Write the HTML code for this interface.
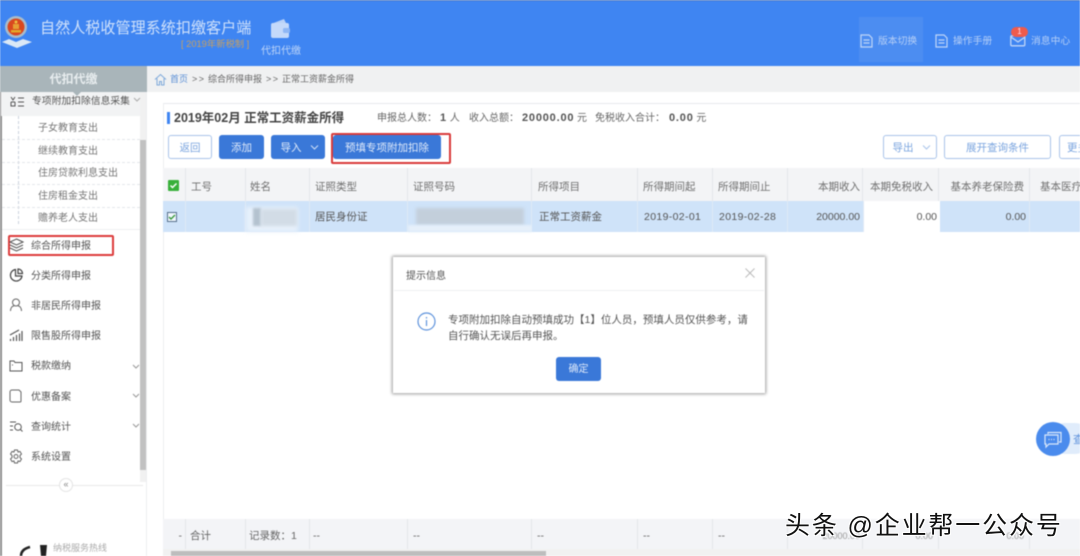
<!DOCTYPE html>
<html lang="zh"><head><meta charset="utf-8">
<style>
*{box-sizing:border-box;margin:0;padding:0}
html,body{width:1080px;height:556px;overflow:hidden;background:#fff}
body{font-family:"Liberation Sans","Noto Sans CJK SC",sans-serif;position:relative;color:#555}
.a{position:absolute;white-space:nowrap}
#blur{position:absolute;left:0;top:0;width:1080px;height:556px;filter:blur(.6px);overflow:hidden}
.btn{position:absolute;border-radius:3px;font-size:10.5px;text-align:center;line-height:27px;height:24px;top:135px}
.bp{background:#3a78d8;color:#dfeafa}
.bo{background:#fff;border:1px solid #a9c4ea;color:#7ba5df;line-height:25px}
.th{position:absolute;top:168px;height:33px;background:#f3f4f6;border-right:1px solid #e4e6ea;font-size:10.5px;line-height:38px;color:#707070;padding:0 5px;white-space:nowrap;overflow:hidden}
.td{position:absolute;top:201px;height:31px;background:#cfe3f9;border-right:1px solid #dfeaf6;font-size:10.5px;line-height:33px;color:#555;padding:0 5px;white-space:nowrap;overflow:hidden}
.tf{position:absolute;top:519px;height:30px;background:#f3f4f7;border-right:1px solid #e4e6ea;font-size:10.5px;line-height:34px;color:#666;padding:0 5px;white-space:nowrap;overflow:hidden}
.r{text-align:right}
.m{position:absolute;left:31px;font-size:10px;line-height:14px;color:#555;white-space:nowrap}
.sub{position:absolute;left:38px;font-size:10px;line-height:14px;color:#777;white-space:nowrap}
.dash{position:absolute;left:2px;width:138px;border-top:1px dashed #e3e6ea}
.ic{position:absolute;left:9px}
.ch{position:absolute;left:132px}
.bc{position:absolute;top:73px;font-size:9px;line-height:13px;color:#666;white-space:nowrap}
b{font-size:11px;color:#555;letter-spacing:.8px}
.s{position:absolute;top:111px;font-size:10px;line-height:15px;color:#666;white-space:nowrap}
</style></head>
<body>
<div id="blur">
<!-- header -->
<div class="a" style="left:0;top:0;width:1080px;height:66px;background:#3f85f2;border-top:1px solid #4a76c0"></div>
<svg class="a" style="left:0;top:15px" width="36" height="36" viewBox="0 0 36 36">
<path d="M2 27 L9 24 L16 27 L23 24 L32 27 L17 33Z" fill="#dbe8f6"/>
<circle cx="16" cy="12" r="11" fill="#a9bccb"/>
<circle cx="16" cy="12" r="8.500" fill="#d9481f"/>
<path d="M11 15 h10 v2.500 h-10z" fill="#e3a92a"/>
<path d="M13 9 h6 v5 h-6z" fill="#e6a034"/>
<circle cx="16" cy="7" r="1.500" fill="#edc040"/>
</svg>
<div class="a" style="left:40px;top:18px;font-size:15.1px;line-height:21px;color:#cfe1fb">自然人税收管理系统扣缴客户端</div>
<div class="a" style="left:181px;top:38px;font-size:9.300px;line-height:12px;color:#c9a05f">[ 2019年新税制 ]</div>
<svg class="a" style="left:270px;top:18px" width="22" height="22" viewBox="0 0 22 22">
<path d="M1 6 L14 1 L16 5Z" fill="#b9d2f8"/>
<rect x="1" y="5" width="18" height="15" rx="2" fill="#c4d9fa"/>
<rect x="13" y="10" width="7" height="5" rx="1.500" fill="#8fb7f5"/>
</svg>
<div class="a" style="left:261px;top:45px;font-size:10px;line-height:14px;color:#bcd4f8">代扣代缴</div>

<div class="a" style="left:859px;top:17px;width:64px;height:45px;background:#4c8df1"></div>
<svg class="a" style="left:860px;top:34px" width="13" height="14" viewBox="0 0 13 14" fill="none" stroke="#c0d6f8" stroke-width="1.200"><path d="M1 1h8l3 3v9H1z"/><path d="M3.500 6h6M3.500 9h6"/></svg>
<div class="a" style="left:878px;top:35px;font-size:9.800px;line-height:13px;color:#b5cff7">版本切换</div>
<svg class="a" style="left:935px;top:34px" width="13" height="14" viewBox="0 0 13 14" fill="none" stroke="#c0d6f8" stroke-width="1.200"><path d="M1 1h8l3 3v9H1z"/><path d="M3.500 6h6M3.500 9h6"/></svg>
<div class="a" style="left:953px;top:35px;font-size:9.800px;line-height:13px;color:#b5cff7">操作手册</div>
<svg class="a" style="left:1010px;top:35px" width="16" height="12" viewBox="0 0 16 12" fill="none" stroke="#c0d6f8" stroke-width="1.300"><rect x=".8" y=".8" width="14" height="10" rx="1"/><path d="M1 2l7 5 7-5"/></svg>
<div class="a" style="left:1011px;top:27px;width:17px;height:10px;background:#ee5b4c;border-radius:5px;font-size:8px;line-height:10px;text-align:center;color:#fde">1</div>
<div class="a" style="left:1031px;top:35px;font-size:9.800px;line-height:13px;color:#b5cff7">消息中心</div>

<!-- breadcrumb -->
<div class="a" style="left:147px;top:66px;width:933px;height:26px;background:#f0f1f2"></div>
<svg class="a" style="left:154px;top:73px" width="13" height="13" viewBox="0 0 13 13" fill="none" stroke="#7ea9da" stroke-width="1"><path d="M1 6.500L6.500 1.500 12 6.500M3 5.500V12h2.500V8.500h2V12H10V5.500"/></svg>
<div class="bc" style="left:170px;color:#5c90d6">首页</div>
<div class="bc" style="left:192px;letter-spacing:1.500px">&gt;&gt;</div>
<div class="bc" style="left:208px">综合所得申报</div>
<div class="bc" style="left:266px;letter-spacing:1.500px">&gt;&gt;</div>
<div class="bc" style="left:282px">正常工资薪金所得</div>

<!-- sidebar -->
<div class="a" style="left:0;top:66px;width:147px;height:26px;background:#a9b5ba;color:#e8edef;font-size:12px;font-weight:bold;line-height:26px;text-align:center">代扣代缴</div>
<div class="a" style="left:0;top:92px;width:147px;height:464px;background:#fff"></div>
<div class="a" style="left:0;top:92px;width:1.500px;height:464px;background:#8f8f8f"></div>
<div class="a" style="left:1px;top:92px;width:146px;height:24px;background:#f2f3f4"></div>
<div class="a" style="left:72px;top:91px;width:0;height:0;border-left:5px solid transparent;border-right:5px solid transparent;border-top:5px solid #a9b5ba"></div>
<div class="a" style="left:140px;top:92px;width:7px;height:390px;background:#f1f1f1"></div>
<div class="a" style="left:140px;top:140px;width:7px;height:330px;background:#c1c1c1"></div>
<svg class="a" style="left:10px;top:96px" width="14" height="12" viewBox="0 0 14 12" fill="none" stroke="#555" stroke-width="1"><path d="M1 1l2 3 2-3M1 6h4M1 6v4h4V6M8 2h6M8 6h6M8 10h6"/></svg>
<div class="a" style="left:32px;top:95px;font-size:9.800px;line-height:14px;color:#555">专项附加扣除信息采集</div>
<svg class="a" style="left:133px;top:97px" width="8" height="5" viewBox="0 0 8 5" fill="none" stroke="#aaa"><path d="M1 1l3 3 3-3"/></svg>
<div class="a" style="left:18px;top:116px;height:108px;border-left:1px dashed #cbd3dc"></div>
<div class="dash" style="top:139px"></div><div class="dash" style="top:162px"></div><div class="dash" style="top:184px"></div><div class="dash" style="top:207px"></div>
<div class="a" style="left:2px;top:229px;width:138px;border-top:1px solid #eef0f2"></div>
<div class="sub" style="top:122px">子女教育支出</div>
<div class="sub" style="top:145px">继续教育支出</div>
<div class="sub" style="top:167px">住房贷款利息支出</div>
<div class="sub" style="top:190px">住房租金支出</div>
<div class="sub" style="top:212px">赡养老人支出</div>

<div class="a" style="left:8px;top:235px;width:106px;height:21px;border:2px solid #dc3c3c;border-radius:2px"></div>
<svg class="ic" style="top:238px" width="15" height="14" viewBox="0 0 15 14" fill="none" stroke="#555" stroke-width="1"><path d="M7.500 1L14 4 7.500 7 1 4zM1 7l6.500 3L14 7M1 10l6.500 3L14 10"/></svg>
<div class="m" style="top:240px">综合所得申报</div>
<svg class="ic" style="top:268px" width="15" height="14" viewBox="0 0 15 14" fill="none" stroke="#444" stroke-width="1.200"><path d="M6.500 1.500a5.800 5.800 0 1 0 6.500 6.500H6.500z"/><path d="M9 1a4.500 4.500 0 0 1 4.500 4.500H9z"/></svg>
<div class="m" style="top:270px">分类所得申报</div>
<svg class="ic" style="top:298px" width="14" height="14" viewBox="0 0 14 14" fill="none" stroke="#666" stroke-width="1"><circle cx="7" cy="4.500" r="3.500"/><path d="M1.500 13c0-3 1.500-5 3.500-5M12.500 13c0-3-1.500-5-3.500-5"/></svg>
<div class="m" style="top:300px">非居民所得申报</div>
<svg class="ic" style="top:328px" width="14" height="14" viewBox="0 0 14 14" fill="none" stroke="#555" stroke-width="1.200"><path d="M1.500 13v-2M4.500 13V9M7.500 13V7M10.500 13V5.500M13 13V3M1 7l9-5"/></svg>
<div class="m" style="top:330px">限售股所得申报</div>
<svg class="ic" style="top:359px" width="14" height="13" viewBox="0 0 14 13" fill="none" stroke="#555" stroke-width="1"><path d="M1 2h4l1 1.500h7V12H1z"/><path d="M3 6h1"/></svg>
<div class="m" style="top:360px">税款缴纳</div>
<svg class="ic" style="top:389px" width="13" height="14" viewBox="0 0 13 14" fill="none" stroke="#666" stroke-width="1"><path d="M3 1h7l2 2v9a1 1 0 0 1-1 1H3a2 2 0 0 1-2-2V3a2 2 0 0 1 2-2z"/></svg>
<div class="m" style="top:391px">优惠备案</div>
<svg class="ic" style="top:420px" width="14" height="13" viewBox="0 0 14 13" fill="none" stroke="#555" stroke-width="1"><path d="M1 2h6M1 6h3M1 10h3"/><circle cx="9" cy="7" r="3.300"/><path d="M11.500 9.500l2 2"/></svg>
<div class="m" style="top:421px">查询统计</div>
<svg class="ic" style="top:449px" width="14" height="15" viewBox="0 0 14 15" fill="none" stroke="#666" stroke-width="1"><path d="M5.500 1h3l.5 2 2-.5 1.500 2.500L11 6.500v2l1.500 1.500L11 12.500 9 12l-.5 2h-3L5 12l-2 .5L1.500 10 3 8.500v-2L1.500 5 3 2.500l2 .5z"/><circle cx="7" cy="7.500" r="2"/></svg>
<div class="m" style="top:451px">系统设置</div>
<svg class="ch" style="top:364px" width="8" height="5" viewBox="0 0 8 5" fill="none" stroke="#999"><path d="M1 1l3 3 3-3"/></svg>
<svg class="ch" style="top:393px" width="8" height="5" viewBox="0 0 8 5" fill="none" stroke="#999"><path d="M1 1l3 3 3-3"/></svg>
<svg class="ch" style="top:423px" width="8" height="5" viewBox="0 0 8 5" fill="none" stroke="#999"><path d="M1 1l3 3 3-3"/></svg>
<div class="a" style="left:6px;top:485px;width:137px;border-top:1px solid #e8e8e8"></div>
<div class="a" style="left:59px;top:478px;width:14px;height:14px;border-radius:50%;background:#fff;border:1px solid #e4e4e4;font-size:9px;line-height:11px;text-align:center;color:#888">«</div>
<div class="a" style="left:146px;top:92px;width:1px;height:464px;background:#eceef0"></div>
<svg class="a" style="left:18px;top:544px" width="32" height="12" viewBox="0 0 32 12"><path d="M3 12C3 6 8 4 12 3" fill="none" stroke="#222" stroke-width="2.500"/><path d="M22 1h7l-1 11h-5z" fill="#222"/></svg>
<div class="a" style="left:53px;top:542px;font-size:9px;line-height:12px;color:#aaa">纳税服务热线</div>

<!-- content -->
<div class="a" style="left:163px;top:103px;width:917px;border-top:1px solid #e8eaec"></div>
<div class="a" style="left:163px;top:103px;height:453px;border-left:1px solid #eceef0"></div>
<div class="a" style="left:167px;top:112px;width:3px;height:12px;background:#3f85f2"></div>
<div class="a" style="left:174px;top:110px;font-size:12.500px;line-height:17px;font-weight:bold;color:#444">2019年02月 正常工资薪金所得</div>
<div class="s" style="left:377px">申报总人数：</div>
<div class="s" style="left:440px"><b>1</b> 人</div>
<div class="s" style="left:469px">收入总额：</div>
<div class="s" style="left:522px"><b>20000.00</b> 元</div>
<div class="s" style="left:595px">免税收入合计：</div>
<div class="s" style="left:669px"><b>0.00</b> 元</div>

<div class="btn bo" style="left:168px;width:44px">返回</div>
<div class="btn bp" style="left:219px;width:45px">添加</div>
<div class="btn bp" style="left:271px;width:54px;padding-right:14px">导入</div>
<svg class="a" style="left:310px;top:145px" width="9" height="5" viewBox="0 0 9 5" fill="none" stroke="#cfe0f8"><path d="M1 .5l3.500 3.500L8 .5"/></svg>
<div class="btn bp" style="left:333px;width:108px">预填专项附加扣除</div>
<div class="a" style="left:331px;top:133px;width:120px;height:31px;border:2px solid #d93a3a;border-radius:2px"></div>
<div class="btn bo" style="left:883px;width:54px;padding-right:14px">导出</div>
<svg class="a" style="left:922px;top:145px" width="9" height="5" viewBox="0 0 9 5" fill="none" stroke="#a9c4ea"><path d="M1 .5l3.500 3.500L8 .5"/></svg>
<div class="btn bo" style="left:944px;width:107px">展开查询条件</div>
<div class="btn bo" style="left:1059px;width:40px;text-align:left;padding-left:7px">更多</div>

<!-- table header -->
<div class="th" style="left:163px;width:23px"></div>
<div class="a" style="left:168px;top:180px;width:11px;height:11px;background:#38b03a;border-radius:1px"></div>
<svg class="a" style="left:169px;top:181px" width="9" height="9" viewBox="0 0 9 9" fill="none" stroke="#fff" stroke-width="1.500"><path d="M1.500 4.500l2 2 4-4"/></svg>
<div class="th" style="left:186px;width:60px">工号</div>
<div class="th" style="left:246px;width:64px;padding-left:4px">姓名</div>
<div class="th" style="left:310px;width:98px">证照类型</div>
<div class="th" style="left:408px;width:124px">证照号码</div>
<div class="th" style="left:532px;width:106px;padding-left:6px">所得项目</div>
<div class="th" style="left:638px;width:75px">所得期间起</div>
<div class="th" style="left:713px;width:75px">所得期间止</div>
<div class="th r" style="left:788px;width:75px;padding-right:2px">本期收入</div>
<div class="th r" style="left:863px;width:76px">本期免税收入</div>
<div class="th r" style="left:939px;width:91px;padding-right:5px">基本养老保险费</div>
<div class="th" style="left:1030px;width:50px;border:0;padding-left:10px">基本医疗保险费</div>

<!-- row -->
<div class="td" style="left:163px;width:23px"></div>
<div class="a" style="left:167px;top:212px;width:10px;height:10px;background:#f1f7fd;border:1px solid #56708c"></div>
<svg class="a" style="left:168px;top:213px" width="8" height="8" viewBox="0 0 8 8" fill="none" stroke="#3a9a3c" stroke-width="1.400"><path d="M1 4l2 2 4-4"/></svg>
<div class="td" style="left:186px;width:60px"></div>
<div class="td" style="left:246px;width:64px"></div>
<div class="a" style="left:246px;top:207px;width:52px;height:25px;background:#e8f1fb;filter:blur(2px)"></div>
<div class="a" style="left:253px;top:208px;width:8px;height:18px;background:#b4c2cf;filter:blur(1px)"></div>
<div class="a" style="left:261px;top:209px;width:36px;height:17px;background:#d2dce6;filter:blur(1.500px)"></div>
<div class="td" style="left:310px;width:98px">居民身份证</div>
<div class="td" style="left:408px;width:124px"></div>
<div class="a" style="left:416px;top:208px;width:108px;height:17px;background:#c3cfdb;filter:blur(1.500px)"></div>
<div class="a" style="left:408px;top:225px;width:124px;height:7px;background:#e6f0fa;filter:blur(1px)"></div>
<div class="td" style="left:532px;width:106px;padding-left:7px">正常工资薪金</div>
<div class="td" style="left:638px;width:75px;padding-left:6px;letter-spacing:.35px">2019-02-01</div>
<div class="td" style="left:713px;width:75px;padding-left:6px;letter-spacing:.35px">2019-02-28</div>
<div class="td r" style="left:788px;width:76px;padding-right:3px">20000.00</div>
<div class="td r" style="left:864px;width:76px;background:#fff;border:0;padding-right:3px">0.00</div>
<div class="td r" style="left:940px;width:90px;padding-right:3px">0.00</div>
<div class="td" style="left:1030px;width:50px;border:0"></div>

<!-- footer row -->
<div class="tf r" style="left:163px;width:23px;padding-right:3px">-</div>
<div class="tf" style="left:186px;width:60px;padding-left:4px">合计</div>
<div class="tf" style="left:246px;width:64px;padding-left:3px">记录数：1</div>
<div class="tf" style="left:310px;width:98px;padding-left:3px">--</div>
<div class="tf" style="left:408px;width:124px">--</div>
<div class="tf" style="left:532px;width:106px">--</div>
<div class="tf" style="left:638px;width:75px">--</div>
<div class="tf" style="left:713px;width:75px">--</div>
<div class="tf r" style="left:788px;width:75px;padding-right:2px;font-size:9px;color:#999">20000.00</div>
<div class="tf r" style="left:863px;width:76px;font-size:9px;color:#999">0.00</div>
<div class="tf r" style="left:939px;width:91px;font-size:9px;color:#999">0.00</div>
<div class="tf" style="left:1030px;width:50px;border:0"></div>
<div class="a" style="left:163px;top:549px;width:917px;height:7px;background:#f1f1f1"></div>
<div class="a" style="left:171px;top:551px;width:375px;height:5px;background:#bdbdbd"></div>

<!-- chat float -->
<div class="a" style="left:1050px;top:423px;width:40px;height:31px;background:#e0ecfb;border-radius:15px"></div>
<div class="a" style="left:1036px;top:422px;width:34px;height:34px;background:#4a8bed;border-radius:50%"></div>
<svg class="a" style="left:1043px;top:431px" width="20" height="18" viewBox="0 0 20 18" fill="none" stroke="#dbe8fb" stroke-width="1.200"><path d="M5 3V1.500h13V11h-2"/><path d="M2 4h13v9H6l-3 3v-3H2z"/><path d="M5.500 8.500h1M8 8.500h1M10.500 8.500h1"/></svg>
<div class="a" style="left:1073px;top:432px;font-size:11px;line-height:16px;color:#5f92dc">查</div>

<!-- dialog -->
<div class="a" style="left:393px;top:257px;width:372px;height:136px;background:#fff;box-shadow:0 0 3px 1px rgba(0,0,0,.4)"></div>
<div class="a" style="left:394px;top:290px;width:370px;border-top:1px solid #eef0f2"></div>
<div class="a" style="left:406px;top:270px;font-size:10px;line-height:14px;color:#555">提示信息</div>
<svg class="a" style="left:745px;top:268px" width="10" height="10" viewBox="0 0 10 10" stroke="#bbb" stroke-width="1"><path d="M.5.500l9 9M9.500.500l-9 9"/></svg>
<svg class="a" style="left:417px;top:312px" width="19" height="19" viewBox="0 0 19 19" fill="none" stroke="#5e93dc" stroke-width="1.200"><circle cx="9.500" cy="9.500" r="8.500"/><path d="M9.500 8v6M9.500 5v1.500"/></svg>
<div class="a" style="left:448px;top:312px;font-size:10.500px;line-height:16px;color:#555;width:305px;white-space:normal">专项附加扣除自动预填成功【1】位人员，预填人员仅供参考，请<br>自行确认无误后再申报。</div>
<div class="a" style="left:556px;top:357px;width:45px;height:24px;background:#3a78d8;border-radius:3px;color:#dfeafa;font-size:10px;line-height:26px;text-align:center">确定</div>
</div>

<!-- watermark -->
<div class="a" style="left:785px;top:511px;font-size:25px;line-height:30px;color:#111;letter-spacing:1.850px;text-shadow:1px 1px 0 #fff,-1px -1px 0 #fff,1px -1px 0 #fff,-1px 1px 0 #fff">头条 @企业帮一公众号</div>
</body></html>
